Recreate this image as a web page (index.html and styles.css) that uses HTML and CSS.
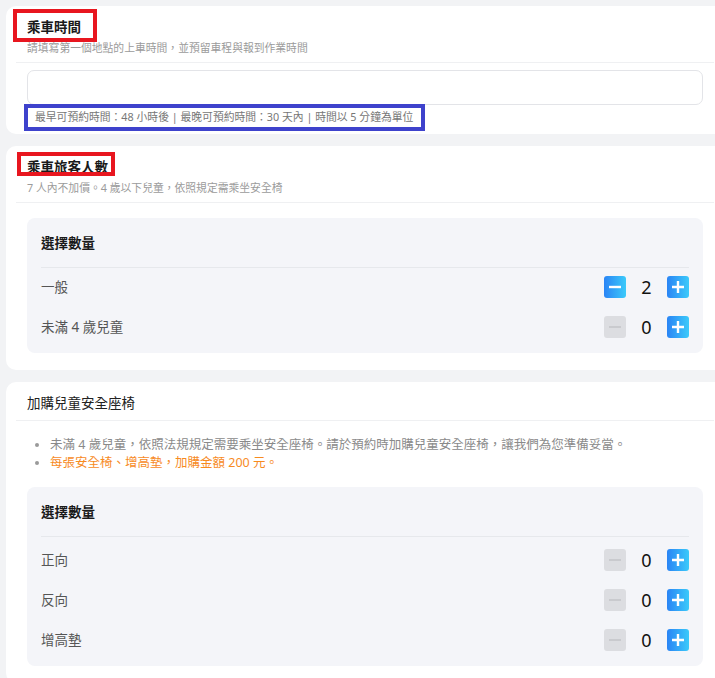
FILE: index.html
```html
<html lang="zh-Hant">
<head>
    <meta charset="UTF-8">
    <meta name="viewport" content="width=device-width, initial-scale=1.0">
    <title>預約</title>

    <link rel="stylesheet" href="styles.css">
</head>
<body>
    <div class="page">
        <section class="card first">
            <div class="head">
                <h3 class="title mark mark-a">乘車時間</h3>
                <p class="sub">請填寫第一個地點的上車時間，並預留車程與報到作業時間</p>
            </div>
            <div class="body tight">
                <input class="field" type="text">
                <p class="info mark mark-info">最早可預約時間：48 小時後 | 最晚可預約時間：30 天內 | 時間以 5 分鐘為單位</p>
            </div>
        </section>

        <section class="card">
            <div class="head">
                <h3 class="title mark mark-b">乘車旅客人數</h3>
                <p class="sub">7 人內不加價。4 歲以下兒童，依照規定需乘坐安全椅</p>
            </div>
            <div class="body">
                <div class="box">
                    <div class="box-head">選擇數量</div>
                    <div class="rows">
                        <div class="row">
                            <span class="label">一般</span>
                            <div class="stepper">
                                <button class="btn on"><svg width="22" height="22"><path d="M5 11h12" stroke="#fff" stroke-width="2.4"/></svg></button>
                                <span class="num">2</span>
                                <button class="btn on"><svg width="22" height="22"><path d="M5 11h12M11 5v12" stroke="#fff" stroke-width="2.4"/></svg></button>
                            </div>
                        </div>
                        <div class="row">
                            <span class="label">未滿 4 歲兒童</span>
                            <div class="stepper">
                                <button class="btn off"><svg width="22" height="22"><path d="M5 11h12" stroke="#c9cace" stroke-width="2"/></svg></button>
                                <span class="num">0</span>
                                <button class="btn on"><svg width="22" height="22"><path d="M5 11h12M11 5v12" stroke="#fff" stroke-width="2.4"/></svg></button>
                            </div>
                        </div>
                    </div>
                </div>
            </div>
        </section>

        <section class="card">
            <div class="head">
                <h3 class="title plain">加購兒童安全座椅</h3>
            </div>
            <div class="body">
                <ul class="notes">
                    <li>未滿 4 歲兒童，依照法規規定需要乘坐安全座椅。請於預約時加購兒童安全座椅，讓我們為您準備妥當。</li>
                    <li class="hot">每張安全椅、增高墊，加購金額 200 元。</li>
                </ul>
                <div class="box">
                    <div class="box-head">選擇數量</div>
                    <div class="rows loose">
                        <div class="row">
                            <span class="label">正向</span>
                            <div class="stepper">
                                <button class="btn off"><svg width="22" height="22"><path d="M5 11h12" stroke="#c9cace" stroke-width="2"/></svg></button>
                                <span class="num">0</span>
                                <button class="btn on"><svg width="22" height="22"><path d="M5 11h12M11 5v12" stroke="#fff" stroke-width="2.4"/></svg></button>
                            </div>
                        </div>
                        <div class="row">
                            <span class="label">反向</span>
                            <div class="stepper">
                                <button class="btn off"><svg width="22" height="22"><path d="M5 11h12" stroke="#c9cace" stroke-width="2"/></svg></button>
                                <span class="num">0</span>
                                <button class="btn on"><svg width="22" height="22"><path d="M5 11h12M11 5v12" stroke="#fff" stroke-width="2.4"/></svg></button>
                            </div>
                        </div>
                        <div class="row">
                            <span class="label">增高墊</span>
                            <div class="stepper">
                                <button class="btn off"><svg width="22" height="22"><path d="M5 11h12" stroke="#c9cace" stroke-width="2"/></svg></button>
                                <span class="num">0</span>
                                <button class="btn on"><svg width="22" height="22"><path d="M5 11h12M11 5v12" stroke="#fff" stroke-width="2.4"/></svg></button>
                            </div>
                        </div>
                    </div>
                </div>
            </div>
        </section>
    </div>
</body>
</html>
```

FILE: styles.css
```css
body {
    margin: 0;
    background: #f2f3f5;
    font-family: "Noto Sans", "Noto Sans CJK TC", sans-serif;
}

.page {
    padding: 6px 0 0 6px;
    overflow: hidden;
}

.card {
    background: #fff;
    border-radius: 10px;
    margin: 0 -9px 12px 0;
    padding: 0 10px 17px;
}

.card.first { padding-bottom: 9px; }

.head {
    padding: 10px 11px 6px;
    border-bottom: 1px solid #eff0f2;
}

.title {
    position: relative;
    margin: 0;
    font-size: 13.5px;
    line-height: 22px;
    font-weight: 700;
    color: #1a1a1a;
}

.title.plain {
    font-weight: 400;
    color: #222;
}

.sub {
    margin: 2px 0 0;
    font-size: 10.8px;
    line-height: 16px;
    color: #9b9b9b;
}

.body { padding: 15px 11px 0; }
.body.tight { padding-top: 7px; }

.field {
    display: block;
    width: 100%;
    height: 35px;
    box-sizing: border-box;
    border: 1px solid #e3e4e8;
    border-radius: 7px;
    background: #fff;
}

.info {
    position: relative;
    margin: 4px 0 0;
    padding-left: 8px;
    font-size: 10.8px;
    line-height: 16px;
    color: #777;
}

/* annotation boxes */
.mark::after {
    content: "";
    position: absolute;
    box-sizing: border-box;
    border: 4px solid #e8161f;
}

.mark-a::after { left: -14px; top: -7px; width: 84px; height: 33px; }
.mark-b::after { left: -10px; top: -4px; width: 98px; height: 24px; }
.mark-info::after { left: -3px; top: -5px; width: 401px; height: 27px; border-color: #3e42cc; }

.notes {
    margin: 0 0 15px;
    padding-left: 23px;
    font-size: 12.5px;
    line-height: 18px;
    color: #8a8a8a;
}

.notes li::marker { color: #9a9a9a; }
.notes .hot { color: #f78b1f; }

.box {
    background: #f4f5f9;
    border-radius: 8px;
    padding: 0 14px 5px;
}

.box-head {
    padding: 14px 0 13px;
    border-bottom: 1px solid #e6e8ec;
    font-size: 13.5px;
    line-height: 22px;
    font-weight: 700;
    color: #1a1a1a;
}

.rows.loose { padding-top: 4px; }

.row {
    display: flex;
    align-items: center;
    justify-content: space-between;
    padding: 8px 0 10px;
}

.label {
    font-size: 13.5px;
    line-height: 22px;
    color: #555;
}

.stepper {
    display: flex;
    align-items: center;
}

.btn {
    display: block;
    width: 22px;
    height: 22px;
    padding: 0;
    border: 0;
    border-radius: 3px;
}

.btn svg { display: block; }

.btn.on { background: linear-gradient(90deg, #2a84f5, #3bcafa); }
.btn.off { background: #dcdde1; }

.num {
    width: 41px;
    text-align: center;
    font-size: 18px;
    line-height: 22px;
    color: #111;
}
```
